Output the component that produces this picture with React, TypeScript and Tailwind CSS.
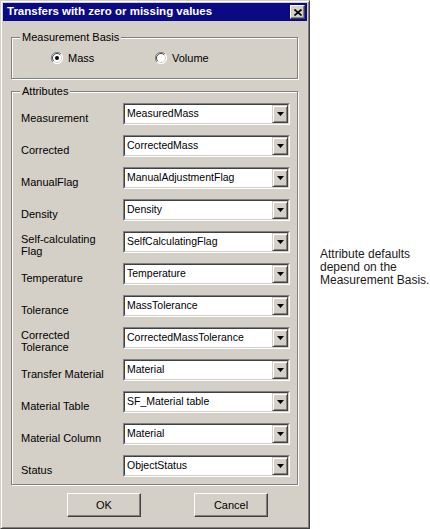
import React from "react";

const rows: { label: string; value: string }[] = [
  { label: "Measurement", value: "MeasuredMass" },
  { label: "Corrected", value: "CorrectedMass" },
  { label: "ManualFlag", value: "ManualAdjustmentFlag" },
  { label: "Density", value: "Density" },
  { label: "Self-calculating Flag", value: "SelfCalculatingFlag" },
  { label: "Temperature", value: "Temperature" },
  { label: "Tolerance", value: "MassTolerance" },
  { label: "Corrected Tolerance", value: "CorrectedMassTolerance" },
  { label: "Transfer Material", value: "Material" },
  { label: "Material Table", value: "SF_Material table" },
  { label: "Material Column", value: "Material" },
  { label: "Status", value: "ObjectStatus" },
];

function Radio({ checked }: { checked?: boolean }) {
  return (
    <svg width="12" height="12" viewBox="0 0 12 12" className="shrink-0">
      <circle cx="6" cy="6" r="5.5" fill="#ffffff" />
      <path d="M10 2 A5.5 5.5 0 0 0 2 10" fill="none" stroke="#808080" strokeWidth="1" />
      <path d="M9.2 2.8 A4.5 4.5 0 0 0 2.8 9.2" fill="none" stroke="#404040" strokeWidth="1" />
      <path d="M2 10 A5.5 5.5 0 0 0 10 2" fill="none" stroke="#ffffff" strokeWidth="1" />
      <path d="M2.8 9.2 A4.5 4.5 0 0 0 9.2 2.8" fill="none" stroke="#d4d0c8" strokeWidth="1" />
      {checked && <circle cx="6" cy="6" r="2" fill="#000000" />}
    </svg>
  );
}

function Combo({ value }: { value: string }) {
  return (
    <div className="w-[167px] h-[22px] border border-t-[#808080] border-l-[#808080] border-r-white border-b-white">
      <div className="h-full flex bg-white border border-t-[#404040] border-l-[#404040] border-r-[#d4d0c8] border-b-[#d4d0c8]">
        <div className="flex-1 flex items-center pl-[2px] text-[10.5px] text-black whitespace-nowrap overflow-hidden">
          {value}
        </div>
        <div className="w-[16px] h-full flex items-center justify-center bg-[#d4d0c8] border border-t-[#d4d0c8] border-l-[#d4d0c8] border-r-[#404040] border-b-[#404040] shadow-[inset_1px_1px_0_#ffffff,inset_-1px_-1px_0_#808080]">
          <svg width="7" height="4" viewBox="0 0 7 4">
            <path d="M0 0 H7 L3.5 4 Z" fill="#000000" />
          </svg>
        </div>
      </div>
    </div>
  );
}

function Group({ title, children, className }: { title: string; children: React.ReactNode; className: string }) {
  return (
    <div className={"relative border border-[#808080] shadow-[inset_1px_1px_0_#ffffff,1px_1px_0_#ffffff] " + className}>
      <span className="absolute -top-[7px] left-[8px] px-[2px] bg-[#d4d0c8] text-[11px] leading-[13px] text-black">
        {title}
      </span>
      {children}
    </div>
  );
}

function Button({ label }: { label: string }) {
  return (
    <button className="w-[74px] h-[24px] bg-[#d4d0c8] text-[11px] text-black border border-t-white border-l-white border-r-[#404040] border-b-[#404040] shadow-[inset_-1px_-1px_0_#808080]">
      {label}
    </button>
  );
}

export default function App() {
  return (
    <div className="flex items-start bg-white w-[430px] h-[529px] font-['Liberation_Sans',Arial,sans-serif]">
      <div className="w-[310px] h-[529px] shrink-0 flex flex-col p-[2px] bg-[#d4d0c8] border border-t-[#d4d0c8] border-l-[#d4d0c8] border-r-[#404040] border-b-[#404040] shadow-[inset_1px_1px_0_#ffffff,inset_-1px_-1px_0_#808080]">
        <div className="h-[18px] flex items-center justify-between bg-[#0a0a84] pl-[4px] pr-[2px]">
          <span className="text-white font-bold text-[11.5px] whitespace-nowrap">
            Transfers with zero or missing values
          </span>
          <div className="w-[15px] h-[14px] flex items-center justify-center bg-[#d4d0c8] border border-t-white border-l-white border-r-[#404040] border-b-[#404040] shadow-[inset_-1px_-1px_0_#808080]">
            <svg width="8" height="7" viewBox="0 0 8 7">
              <path d="M0.5 0.5 L7.5 6.5 M7.5 0.5 L0.5 6.5" stroke="#000000" strokeWidth="1.6" />
            </svg>
          </div>
        </div>

        <div className="px-[8px]">
          <Group title="Measurement Basis" className="mt-[16px] w-[287px] h-[42px] flex items-center pl-[39px]">
            <div className="w-[104px] flex items-center gap-[5px] text-[11px] text-black">
              <Radio checked />
              <span>Mass</span>
            </div>
            <div className="flex items-center gap-[5px] text-[11px] text-black">
              <Radio />
              <span>Volume</span>
            </div>
          </Group>

          <Group title="Attributes" className="mt-[12px] w-[287px] pt-[11px] pl-[9px] pr-[7px] pb-[7px]">
            <div className="flex flex-col gap-[10px]">
              {rows.map((r) => (
                <div key={r.label} className="flex items-start h-[22px]">
                  <div
                    className={
                      "w-[102px] h-[22px] flex items-center text-[11px] leading-[12px] text-black " +
                      (r.label.length > 17 ? "pt-[6px]" : "pt-[7px]")
                    }
                  >
                    <span className="max-w-[95px]">{r.label}</span>
                  </div>
                  <Combo value={r.value} />
                </div>
              ))}
            </div>
          </Group>

          <div className="mt-[8px] flex pl-[56px] gap-[53px]">
            <Button label="OK" />
            <Button label="Cancel" />
          </div>
        </div>
      </div>

      <div className="mt-[248px] pl-[10px] text-[12px] leading-[13px] text-[#1a1a1a]">
        <div>Attribute defaults</div>
        <div>depend on the</div>
        <div>Measurement Basis.</div>
      </div>
    </div>
  );
}
